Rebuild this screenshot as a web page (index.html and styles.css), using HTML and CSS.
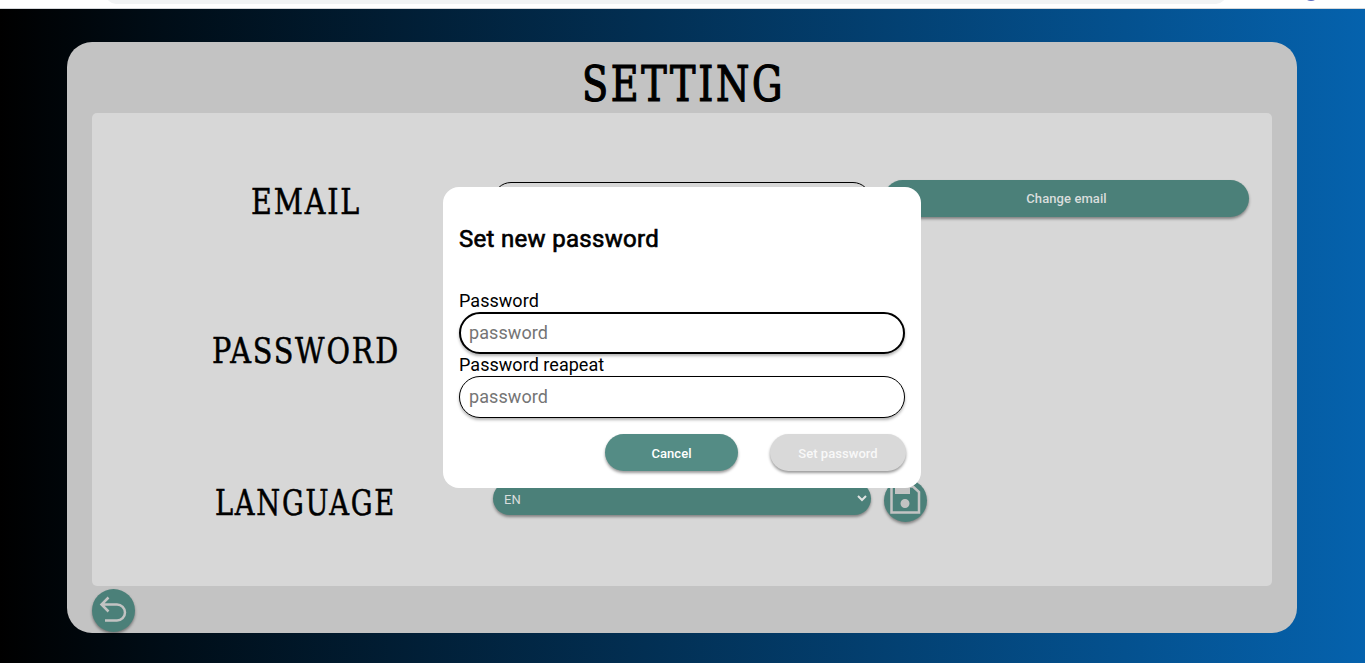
FILE: index.html
```html
<!DOCTYPE html>
<html lang="en">
<head>
<meta charset="utf-8">
<title>Setting</title>
<link rel="stylesheet" href="styles.css">
</head>
<body>
<div class="topbar"><div class="address"></div><div class="avatar"></div></div>
<main class="page">
  <section class="card">
    <h1 class="title"><svg width="224" height="64"><text x="12" y="49" textLength="203" lengthAdjust="spacingAndGlyphs">SETTING</text></svg></h1>
    <div class="panel">
      <h2 class="label"><svg width="130" height="46"><text x="12" y="37" textLength="110" lengthAdjust="spacingAndGlyphs">EMAIL</text></svg></h2>
      <div class="field"></div>
      <button class="btn change">Change email</button>
      <h2 class="label"><svg width="208" height="46"><text x="12" y="36" textLength="188" lengthAdjust="spacingAndGlyphs">PASSWORD</text></svg></h2>
      <div></div>
      <div></div>
      <h2 class="label"><svg width="200" height="46"><text x="11" y="38" textLength="181" lengthAdjust="spacingAndGlyphs">LANGUAGE</text></svg></h2>
      <div class="select"><span>EN</span><svg width="10" height="7" viewBox="0 0 10 7"><path d="M1 1l4 4 4-4"/></svg></div>
      <button class="round" aria-label="Save"><svg width="43" height="43" viewBox="0 0 43 43"><path d="M7.500 7.500H29L35 13V33.500H7.500Z"/><path class="solid" d="M11 7h15v8H11zM21 20a4.500 4.500 0 1 1 0 9 4.500 4.500 0 0 1 0-9z"/></svg></button>
    </div>
    <button class="round back" aria-label="Back"><svg width="43" height="43" viewBox="0 0 43 43"><path d="M16.500 8.500L9.500 15.500L16.500 22.500M9.500 15.500H25A8 8 0 0 1 25 31.500H13"/></svg></button>
  </section>
</main>
<div class="modal" role="dialog">
  <h2 class="modal-title">Set new password</h2>
  <label>Password</label>
  <input class="input focused" placeholder="password">
  <label>Password reapeat</label>
  <input class="input" placeholder="password">
  <div class="actions">
    <button class="btn cancel">Cancel</button>
    <button class="btn submit" disabled>Set password</button>
  </div>
</div>
</body>
</html>
```
FILE: styles.css
```css
* { box-sizing: border-box; }
body { margin: 0; height: 663px; overflow: hidden; font-family: Roboto, sans-serif; color: #000; }
h1, h2 { margin: 0; font-weight: 400; }
.topbar { height: 9px; background: #fff; border-bottom: 1px solid #d5d7da; display: flex; overflow: hidden; }
.address { width: 1120px; height: 20px; margin: -16px 0 0 106px; border-radius: 10px; background: #f1f3f4; }
.avatar { width: 16px; height: 16px; margin: -15px 0 0 77px; border-radius: 50%; background: #5c6bc0; }
.page { height: 654px; padding: 33px 68px 0 67px; background: linear-gradient(90deg, #000 0%, #000d17 12%, #0562ad 100%); }
.card { height: 591px; padding: 0 25px; border-radius: 25px; background: #c3c3c3; display: flex; flex-direction: column; }
.title { height: 71px; flex-shrink: 0; padding-top: 10px; display: flex; justify-content: center; }
.title svg, .label svg { display: block; overflow: visible; font-family: "DejaVu Serif Condensed", "DejaVu Serif", serif; stroke: #000; }
.title svg { font-size: 48px; letter-spacing: 3px; stroke-width: 1.2px; }
.label svg { font-size: 35px; letter-spacing: 2px; stroke-width: .5px; }
.panel { height: 473px; flex-shrink: 0; padding: 12px 23px; border-radius: 5px; background: #d7d7d7; display: grid; grid-template-columns: 378px 378px 365px; grid-template-rows: repeat(3, 150px); align-items: center; }
.label { display: flex; justify-content: center; }
.field { height: 36px; border: 1px solid #000; border-radius: 18px; }
.btn { height: 37px; padding: 1px 0 0; border: 0; border-radius: 19px; background: #4b8079; color: #d9dddc; font: 500 13px Roboto, sans-serif; letter-spacing: .05px; box-shadow: 0 2px 3px rgba(0, 0, 0, .4); }
.change { width: 365px; margin: -3px 0 0 13px; padding: 0; letter-spacing: .08px; }
.select { height: 33px; margin-top: -3px; padding: 0 4px 0 11px; border-radius: 17px; background: #4b8079; color: #d9dddc; font-size: 13px; display: flex; align-items: center; justify-content: space-between; box-shadow: 0 2px 3px rgba(0, 0, 0, .4); }
.select span { padding-top: 2px; }
.select path { fill: none; stroke: #e0e3e2; stroke-width: 2; }
.round { width: 43px; height: 43px; margin-left: 13px; padding: 0; border: 0; border-radius: 50%; background: #4b8079; box-shadow: 0 2px 3px rgba(0, 0, 0, .4); }
.round svg { display: block; }
.round path { fill: none; stroke: #c3c3c3; stroke-width: 2.5; }
.round .solid { fill: #c3c3c3; stroke: none; }
.back { margin: 3px 0 0; flex-shrink: 0; }
.modal { position: absolute; left: 443px; top: 187px; width: 478px; height: 301px; padding: 37px 16px 16px; border-radius: 16px; background: #fff; display: flex; flex-direction: column; }
.modal-title { height: 66px; font-size: 24px; line-height: 31px; -webkit-text-stroke: .65px #000; letter-spacing: .3px; }
.modal label { height: 22px; line-height: 22px; font-size: 18px; letter-spacing: .04px; }
.input { width: 446px; height: 42px; padding: 0 9px 2px; border: 1px solid #000; border-radius: 21px; background: #fff; outline: none; font: 18px Roboto, sans-serif; letter-spacing: .08px; box-shadow: 0 2px 3px rgba(0, 0, 0, .3); }
.input.focused { border-width: 2px; padding: 0 8px 2px; }
.input::placeholder { color: #757575; }
.actions { display: flex; justify-content: flex-end; gap: 32px; margin: 16px -1px 0 0; }
.cancel { width: 133px; background: #548c85; color: #fff; }
.submit { width: 136px; background: #d9d9d9; color: #f8f8f8; }
```
